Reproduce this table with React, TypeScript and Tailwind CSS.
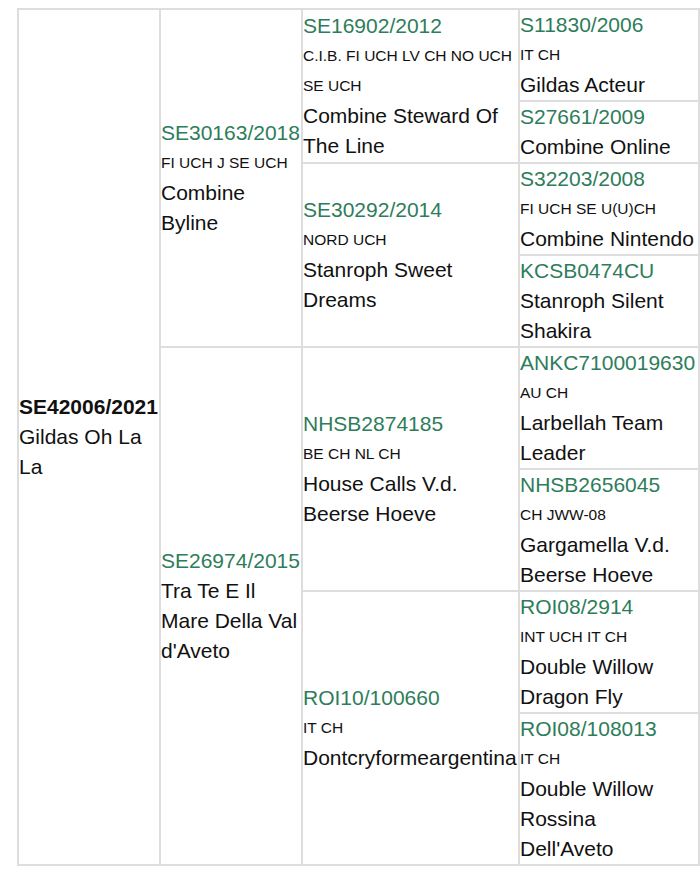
import React from "react";

// ─── Data ─────────────────────────────────────────────────────────────────────

type Dog = {
  reg: string;
  titles?: string[];
  name: string[];
};

const sire: Dog = { reg: "SE30163/2018", titles: ["FI UCH J SE UCH"], name: ["Combine", "Byline"] };
const dam: Dog = { reg: "SE26974/2015", name: ["Tra Te E Il", "Mare Della Val", "d'Aveto"] };

const grand: Dog[] = [
  { reg: "SE16902/2012", titles: ["C.I.B. FI UCH LV CH NO UCH", "SE UCH"], name: ["Combine Steward Of", "The Line"] },
  { reg: "SE30292/2014", titles: ["NORD UCH"], name: ["Stanroph Sweet", "Dreams"] },
  { reg: "NHSB2874185", titles: ["BE CH NL CH"], name: ["House Calls V.d.", "Beerse Hoeve"] },
  { reg: "ROI10/100660", titles: ["IT CH"], name: ["Dontcryformeargentina"] },
];

const great: Dog[] = [
  { reg: "S11830/2006", titles: ["IT CH"], name: ["Gildas Acteur"] },
  { reg: "S27661/2009", name: ["Combine Online"] },
  { reg: "S32203/2008", titles: ["FI UCH SE U(U)CH"], name: ["Combine Nintendo"] },
  { reg: "KCSB0474CU", name: ["Stanroph Silent", "Shakira"] },
  { reg: "ANKC7100019630", titles: ["AU CH"], name: ["Larbellah Team", "Leader"] },
  { reg: "NHSB2656045", titles: ["CH JWW-08"], name: ["Gargamella V.d.", "Beerse Hoeve"] },
  { reg: "ROI08/2914", titles: ["INT UCH IT CH"], name: ["Double Willow", "Dragon Fly"] },
  { reg: "ROI08/108013", titles: ["IT CH"], name: ["Double Willow", "Rossina", "Dell'Aveto"] },
];

// ─── Cell ─────────────────────────────────────────────────────────────────────

const cellCls = "border-2 border-[#dddddd] p-0 align-middle";

function DogCell({ dog, rowSpan }: { dog: Dog; rowSpan?: number }) {
  return (
    <td rowSpan={rowSpan} className={cellCls}>
      <div className="text-[#2e7d5a] text-[21px] leading-[30px] whitespace-nowrap">{dog.reg}</div>
      {dog.titles?.map(t => (
        <div key={t} className="text-[15.5px] leading-[30px] text-[#111111] whitespace-nowrap">
          {t}
        </div>
      ))}
      {dog.name.map(n => (
        <div key={n} className="text-[21px] leading-[30px] text-[#111111] whitespace-nowrap">
          {n}
        </div>
      ))}
    </td>
  );
}

// ─── Page ─────────────────────────────────────────────────────────────────────

export default function App() {
  return (
    <div
      className="min-h-screen bg-white pl-[17px] pt-[8px]"
      style={{ fontFamily: '"Liberation Sans", Arial, sans-serif' }}
    >
      <table className="table-fixed border-collapse w-[683px]">
        <colgroup>
          <col className="w-[142px]" />
          <col className="w-[142px]" />
          <col className="w-[217px]" />
          <col className="w-[180px]" />
        </colgroup>
        <tbody>
          {great.map((g, i) => (
            <tr key={g.reg}>
              {i === 0 && (
                <td rowSpan={8} className={cellCls}>
                  <div className="text-[21px] leading-[30px] font-bold text-[#111111]">SE42006/2021</div>
                  <div className="text-[21px] leading-[30px] text-[#111111]">Gildas Oh La</div>
                  <div className="text-[21px] leading-[30px] text-[#111111]">La</div>
                </td>
              )}
              {i === 0 && <DogCell dog={sire} rowSpan={4} />}
              {i === 4 && <DogCell dog={dam} rowSpan={4} />}
              {i % 2 === 0 && <DogCell dog={grand[i / 2]} rowSpan={2} />}
              <DogCell dog={g} />
            </tr>
          ))}
        </tbody>
      </table>
    </div>
  );
}
